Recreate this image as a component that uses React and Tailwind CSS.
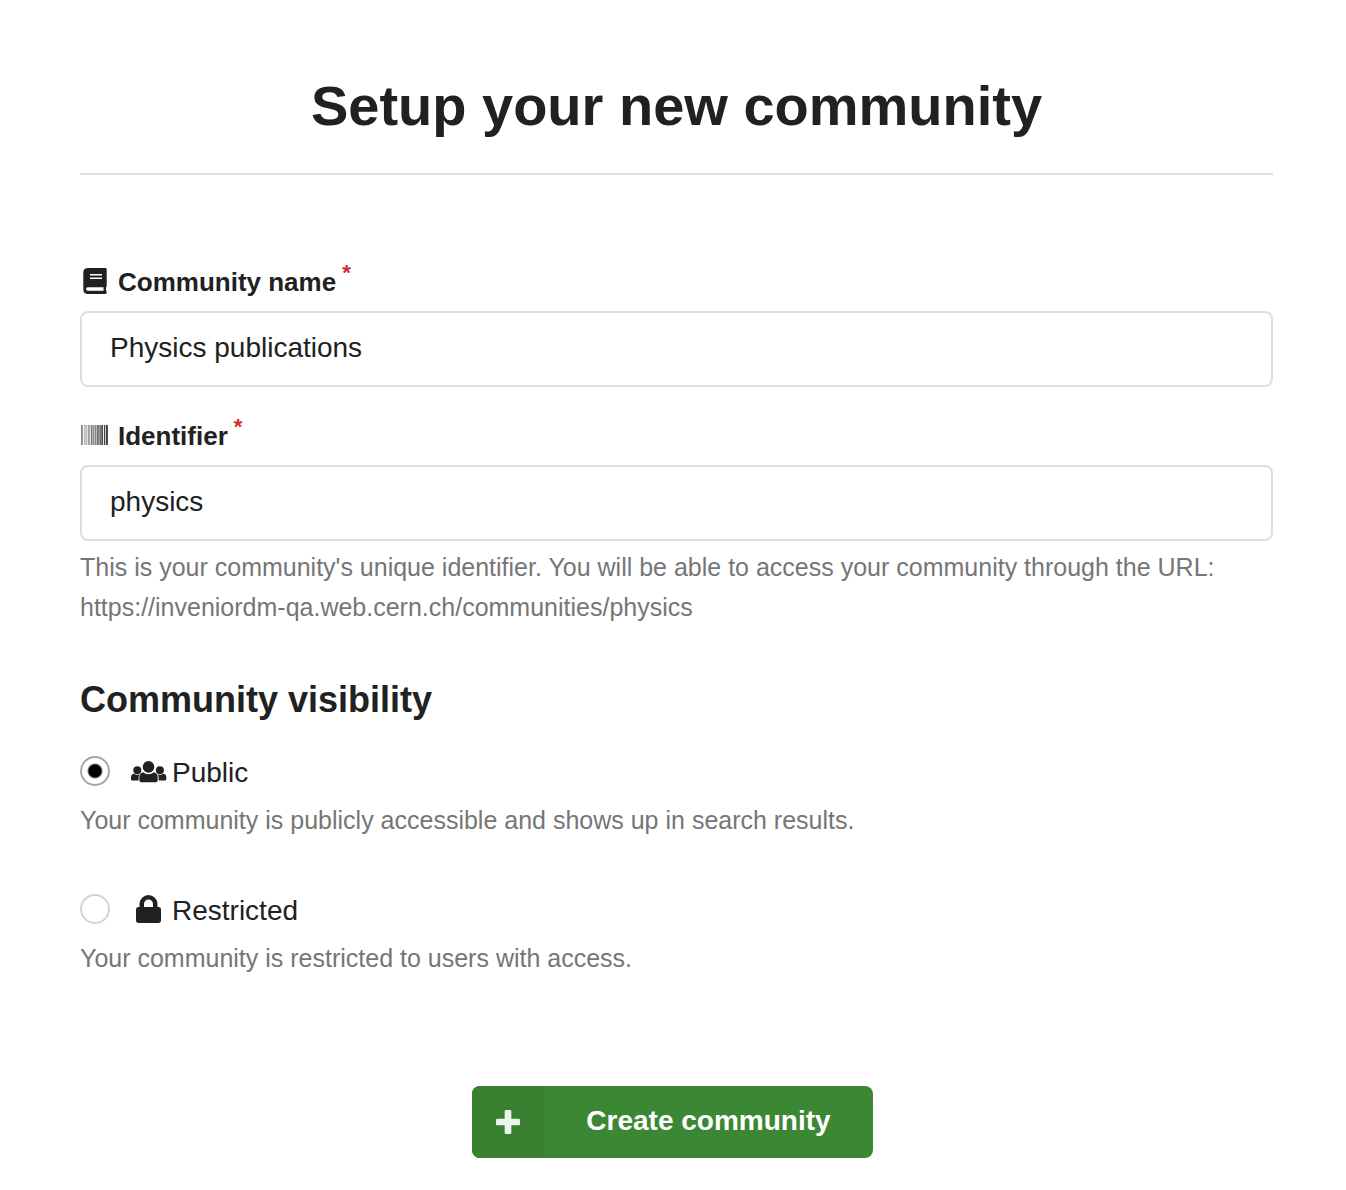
import { useState } from "react";

function BookIcon() {
  return (
    <svg viewBox="0 0 24 26" className="h-[26px] w-6" fill="currentColor" aria-hidden="true">
      <path fillRule="evenodd" d="M4.500 0H22.500A1.200 1.200 0 0 1 23.700 1.200V18a1.200 1.200 0 0 1-.5 1c-.3 1-.3 2.700 0 3.800.8.400.8 3.200-.7 3.200H4.500A4.500 4.500 0 0 1 .3 21.500V4.500A4.500 4.500 0 0 1 4.500 0ZM7 6v1.600h12V6Zm0 3.400V11h12V9.400ZM4.800 19.300a1.700 1.700 0 0 0 0 3.500h15.800c-.2-1-.2-2.500 0-3.500Z" />
    </svg>
  );
}

const barcodeShades = [0.55, 0.45, 0.05, 0.3, 0.22, 0.3, 0.12, 0.42, 0.4, 0.12, 0.6, 0.35, 0.5, 0.3, 0.55, 0.3, 0.65, 0.55, 0.45, 0.65, 0.6, 0.8, 0.08, 0.85, 0.25, 0.85, 0.8];

function BarcodeIcon() {
  return (
    <svg viewBox="0 0 28 20" className="h-5 w-7" fill="currentColor" aria-hidden="true">
      {barcodeShades.map((shade, i) => (
        <rect key={i} x={i} y="0" width="1" height="20" opacity={shade} />
      ))}
    </svg>
  );
}

function UsersIcon() {
  return (
    <svg viewBox="0 0 36 24" className="h-6 w-9" fill="currentColor" aria-hidden="true">
      <circle cx="17.500" cy="7.900" r="5.800" />
      <circle cx="6.300" cy="11.200" r="4" />
      <circle cx="28.900" cy="11.200" r="4" />
      <path d="M12 13.200a8.500 8.500 0 0 0 11 0c2.400.5 3.700 2.500 3.700 4.700v3.400a1.900 1.900 0 0 1-1.900 1.900H10.300a1.900 1.900 0 0 1-1.900-1.900v-3.400c0-2.200 1.200-4.200 3.600-4.700Z" />
      <path d="M3 14.800a5.500 5.500 0 0 0 5.700.4C7.700 16.600 7.600 18 7.600 21.500H1.200A1.200 1.200 0 0 1 0 20.300v-2.300c0-1.800 1.200-3 3-3.200ZM32.300 14.800a5.500 5.500 0 0 1-5.700.4c1 1.400 1.100 2.800 1.100 6.300h6.400a1.200 1.200 0 0 0 1.200-1.200v-2.300c0-1.800-1.200-3-3-3.200Z" />
    </svg>
  );
}

function LockIcon() {
  return (
    <svg viewBox="0 0 26 28" className="h-7 w-[26px]" fill="currentColor" aria-hidden="true">
      <path fillRule="evenodd" d="M3.500 12V9a9 9 0 0 1 18 0v3h.8A2.700 2.700 0 0 1 25 14.700v10.600a2.700 2.700 0 0 1-2.700 2.700H2.700A2.700 2.700 0 0 1 0 25.300V14.700A2.700 2.700 0 0 1 2.700 12ZM8 12h9V9a4.500 4.500 0 0 0-9 0Z" />
    </svg>
  );
}

function PlusIcon() {
  return (
    <svg viewBox="0 32 448 448" className="size-6" fill="currentColor" aria-hidden="true">
      <path d="M448 294.200v-76.400c0-13.300-10.700-24-24-24H286.200V56c0-13.300-10.700-24-24-24h-76.400c-13.300 0-24 10.700-24 24v137.800H24c-13.300 0-24 10.700-24 24v76.400c0 13.300 10.700 24 24 24h137.800V456c0 13.300 10.700 24 24 24h76.400c13.300 0 24-10.700 24-24V318.200H424c13.300 0 24-10.700 24-24z" />
    </svg>
  );
}

function Field({ id, label, icon, value, onChange, describedBy }) {
  return (
    <div className="flex flex-col gap-[14px]">
      <label htmlFor={id} className="flex h-8 items-center text-[26px] font-bold leading-8">
        <span className="mr-2 flex w-[30px] justify-center">{icon}</span>
        <span className="pt-0.5">{label}</span>
        <span className="-mt-1 ml-1.5 self-start text-[22px] leading-6 text-[#c9302c]">*</span>
      </label>
      <input
        id={id}
        type="text"
        required
        value={value}
        onChange={onChange}
        aria-describedby={describedBy}
        className="h-[76px] w-full rounded-lg border-2 border-[#dededf] bg-white px-7 pb-0.5 text-[28px] outline-none focus:border-[#85b7d9]"
      />
    </div>
  );
}

function Option({ id, label, icon, checked, onChange, help }) {
  return (
    <div>
      <label htmlFor={id} className="flex h-[34px] items-center text-[28px] leading-[34px]">
        <input
          id={id}
          type="radio"
          name="visibility"
          checked={checked}
          onChange={onChange}
          className="mr-[21px] size-[30px] shrink-0 appearance-none rounded-full border-2 border-[#d4d4d5] bg-white checked:border-[#a6a6a7] checked:bg-[radial-gradient(circle,#000_0_6px,transparent_8px)]"
        />
        <span className="mr-[5px] flex w-9 justify-center">{icon}</span>
        <span className="pt-1">{label}</span>
      </label>
      <p className="mt-3 text-[25px] leading-10 text-[#767676]">{help}</p>
    </div>
  );
}

export default function App() {
  const [name, setName] = useState("Physics publications");
  const [identifier, setIdentifier] = useState("physics");
  const [visibility, setVisibility] = useState("public");

  return (
    <main className="min-h-screen bg-white pt-[70px] pr-[73px] pb-8 pl-20 font-['Liberation_Sans',Arial,sans-serif] text-[#212121]">
      <h1 className="text-center text-[56px] font-bold leading-[72px]">Setup your new community</h1>
      <hr className="mt-[31px] border-t-2 border-[#dededf]" />
      <form onSubmit={(e) => e.preventDefault()} className="mt-[90px]">
        <div className="flex flex-col gap-8">
          <Field id="name" label="Community name" icon={<BookIcon />} value={name} onChange={(e) => setName(e.target.value)} />
          <Field id="identifier" label="Identifier" icon={<BarcodeIcon />} value={identifier} onChange={(e) => setIdentifier(e.target.value)} describedBy="identifier-help" />
        </div>
        <p id="identifier-help" className="mt-1.5 text-[25px] leading-10 text-[#767676]">
          This is your community's unique identifier. You will be able to access your community through the URL:
          <br />
          https://inveniordm-qa.web.cern.ch/communities/{identifier}
        </p>
        <fieldset className="mt-12">
          <legend className="text-[36px] font-bold leading-[50px]">Community visibility</legend>
          <div className="mt-[29px] flex flex-col gap-[52px]">
            <Option id="public" label="Public" icon={<UsersIcon />} checked={visibility === "public"} onChange={() => setVisibility("public")} help="Your community is publicly accessible and shows up in search results." />
            <Option id="restricted" label="Restricted" icon={<LockIcon />} checked={visibility === "restricted"} onChange={() => setVisibility("restricted")} help="Your community is restricted to users with access." />
          </div>
        </fieldset>
        <div className="mt-[108px] flex justify-center">
          <button type="submit" className="mr-2 flex h-[72px] items-stretch overflow-hidden rounded-lg bg-[#3c8733] text-[28px] font-bold text-white">
            <span className="flex w-[72px] items-center justify-center bg-[#398030] text-[#ebf3ea]">
              <PlusIcon />
            </span>
            <span className="flex items-center px-[42px] pb-0.5">Create community</span>
          </button>
        </div>
      </form>
    </main>
  );
}
